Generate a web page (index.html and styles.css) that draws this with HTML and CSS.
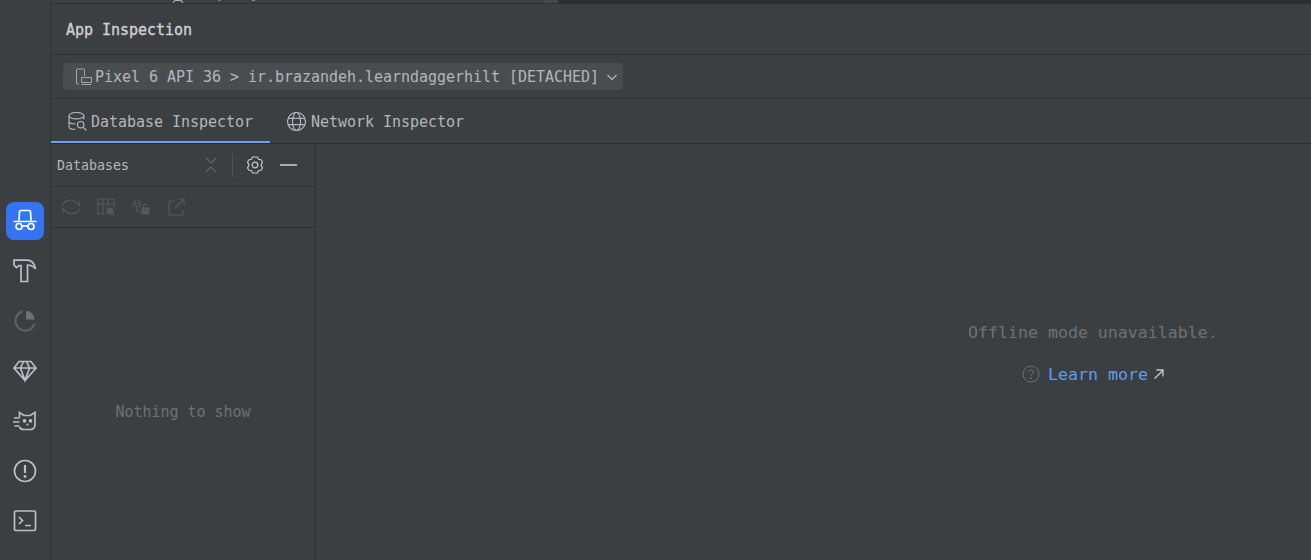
FILE: index.html
```html
<!DOCTYPE html>
<html lang="en">
<head>
<meta charset="utf-8">
<title>App Inspection</title>
<link rel="stylesheet" href="styles.css">
</head>
<body>
<div class="app">
  <aside class="rail">
    <div class="rail-btn active">
      <svg viewBox="0 0 24 24" class="ico hat"><path d="M6 11.500l.5-9Q6.600 1.500 8 1.500h8q1.400 0 1.500 1l.5 9M.5 12.500h23"/><circle cx="6" cy="17.500" r="3"/><circle cx="18" cy="17.500" r="3"/><path d="M9 17h6"/></svg>
    </div>
    <div class="rail-btn">
      <svg viewBox="0 0 24 24" class="ico"><path d="M1 1.200H14C18.500 1.200 21.500 5 22.500 10 20 7 17.500 6 14.500 6V22.500H8V6.500H6L3.500 8.500 1 6z"/></svg>
    </div>
    <div class="rail-btn dim">
      <svg viewBox="0 0 24 24" class="ico thick"><path d="M9.500 2.500a9.700 9.700 0 1 0 12 12"/><path d="M13 2a8.500 8.500 0 0 1 8.500 8.500H13z" fill="currentColor" stroke="none" class="wedge"/></svg>
    </div>
    <div class="rail-btn">
      <svg viewBox="0 0 24 24" class="ico up"><path d="M6 2.500h12L23 9 12 21.500 1 9zM1 9h22M7.500 9L12 21.500 16.500 9l-3-6.500h-3z"/></svg>
    </div>
    <div class="rail-btn">
      <svg viewBox="0 0 24 24" class="ico"><path d="M6.500 8V3.500L11 6.500h6l5-3V16a4.500 4.500 0 0 1-4.500 4.500h-7A4.500 4.500 0 0 1 6.500 18M1 9h6M0 13h6.500M1.500 17h5"/><circle cx="11.500" cy="11.800" r="1" fill="currentColor"/><circle cx="17.500" cy="11.800" r="1" fill="currentColor"/><path d="M13.500 15.500h2"/></svg>
    </div>
    <div class="rail-btn">
      <svg viewBox="0 0 24 24" class="ico"><circle cx="12" cy="12" r="10.500"/><path d="M12 6v8" stroke-width="2.200"/><circle cx="12" cy="17.500" r="1.400" fill="currentColor" stroke="none"/></svg>
    </div>
    <div class="rail-btn">
      <svg viewBox="0 0 24 24" class="ico"><rect x="1.500" y="2" width="21" height="19.500" rx="1.500"/><path d="M6 8l3.500 3.500L6 15M12 16.500h6"/></svg>
    </div>
    <div class="rail-btn">
      <svg viewBox="0 0 24 24" class="ico peek"><circle cx="10" cy="12" r="10"/></svg>
    </div>
  </aside>
  <main class="main">
    <div class="topstrip">
      <span class="strip-bit arc"></span>
      <span class="strip-bit dot1"></span>
      <span class="strip-bit dot2"></span>
      <span class="strip-fill"></span>
      <span class="strip-dark"></span>
    </div>
    <header class="title-bar">App Inspection</header>
    <div class="device-bar">
      <div class="device-pick">
        <svg viewBox="0 0 17 17" class="dev-ico"><path d="M4 16H2.500a1 1 0 0 1-1-1V2a1 1 0 0 1 1-1h6a1 1 0 0 1 1 1v6M6.500 9.500h10v5h-10zM6.500 16.500h10"/></svg>
        <span>Pixel 6 API 36 &gt; ir.brazandeh.learndaggerhilt [DETACHED]</span>
        <svg viewBox="0 0 12 12" class="chev"><path d="M1.500 4l4.500 4.500L10.500 4"/></svg>
      </div>
    </div>
    <nav class="tabs">
      <div class="tab selected">
        <svg viewBox="1 1 18 18" class="tab-ico"><ellipse cx="9" cy="4.500" rx="7" ry="3"/><path d="M2 4.500v10.500c0 1.500 3 2.500 6 2.500M2 9.800c0 1.500 3 2.500 6 2.500M16 4.500V8"/><circle cx="13" cy="13" r="3"/><path d="M15.500 15.500L18.500 18.500"/></svg>
        <span>Database Inspector</span>
      </div>
      <div class="tab second">
        <svg viewBox="1 1 18 18" class="tab-ico"><circle cx="10" cy="10" r="8.500"/><ellipse cx="10" cy="10" rx="3.800" ry="8.500"/><path d="M2 7h16M2 13h16"/></svg>
        <span>Network Inspector</span>
      </div>
    </nav>
    <div class="body">
      <section class="side">
        <div class="side-head">
          <span class="side-title">Databases</span>
          <svg viewBox="0 0 14 18" class="collapse"><path d="M2 2l5 5 5-5M2 16l5-5 5 5"/></svg>
          <span class="vsep"></span>
          <svg viewBox="0 0 20 20" class="gear"><path d="M7.500 2h5l1 2.300 2.500.4 1.500 2.300-1.500 3 1.500 3-1.500 2.300-2.500.4-1 2.300h-5l-1-2.300-2.500-.4-1.500-2.300 1.500-3-1.500-3 1.500-2.300 2.500-.4z"/><circle cx="10" cy="10" r="2.800"/></svg>
          <span class="minus"></span>
        </div>
        <div class="side-tools">
          <svg viewBox="0 0 20 20" class="tool"><path d="M1.500 9a8 8 0 0 1 13.500-3.500L18 8.500V3.500M18.500 11A8 8 0 0 1 5 14.500L2 11.500v5"/></svg>
          <svg viewBox="0 0 20 20" class="tool"><path d="M9 17H2V2h16v8M2 7h16M7 2v15M12 2v7"/><circle cx="14" cy="14" r="3" fill="currentColor"/><path d="M16 16l2.500 2.500"/></svg>
          <svg viewBox="0 0 20 20" class="tool"><path d="M4 3v3M8 3v3M2.500 6h7v3h-7zM6 9v5h3"/><rect x="11" y="11" width="7" height="6" fill="currentColor"/><path d="M12.500 11V9a2 2 0 0 1 4 0"/></svg>
          <svg viewBox="0 0 20 20" class="tool"><path d="M8 4H3v14h14v-5M9 11l9-9M12 2h6v6"/></svg>
        </div>
        <div class="side-empty">Nothing to show</div>
      </section>
      <section class="content">
        <p class="offline">Offline mode unavailable.</p>
        <div class="learn">
          <svg viewBox="0 0 18 18" class="help"><circle cx="9" cy="9" r="8"/><path d="M6.800 7a2.200 2.200 0 1 1 3.400 1.900c-.8.500-1.200 1-1.200 1.800"/><circle cx="9" cy="13.200" r=".6" fill="currentColor"/></svg>
          <span class="link">Learn more</span>
          <svg viewBox="0 0 12 12" class="ext"><path d="M1.500 10.500L10 2.500M3.500 2h6.500v6.500"/></svg>
        </div>
      </section>
    </div>
  </main>
</div>
</body>
</html>
```

FILE: styles.css
```css
* { box-sizing: border-box; }
html, body { margin: 0; height: 100%; overflow: hidden; }
body { background: #3c3f41; color: #b4b6bb; font-family: "DejaVu Sans Mono", "Liberation Mono", monospace; font-size: 15px; letter-spacing: -.03px; }
svg { fill: none; stroke: currentColor; display: block; flex: none; }
.app { display: flex; height: 560px; }
.rail { width: 51px; flex: none; border-right: 1px solid #2f3133; padding: 202px 0 0 6px; display: flex; flex-direction: column; gap: 12px; color: #bcbec3; overflow: hidden; }
.rail-btn { width: 38px; height: 38px; flex: none; border-radius: 8px; display: flex; align-items: center; justify-content: center; }
.rail-btn.active { background: #3574f0; color: #fff; }
.rail-btn.dim { color: #5f6265; }
.ico { width: 24px; height: 24px; stroke-width: 1.700; }
.ico.thick { stroke-width: 2.200; }
.ico.peek { stroke-width: 1.600; }
.wedge { color: #6f7275; }
.main { flex: 1; min-width: 0; display: flex; flex-direction: column; }
.topstrip { height: 4px; flex: none; border-bottom: 1px solid #2f3133; display: flex; overflow: hidden; }
.strip-bit { height: 3px; flex: none; }
.arc { width: 10px; margin-left: 122px; border: 1px solid #b4b6bb; border-bottom: 0; border-radius: 5px 5px 0 0; }
.dot1 { width: 3px; height: 1px; margin-left: 35px; background: #7b7e81; }
.dot2 { width: 3px; height: 1px; margin-left: 31px; background: #8b8e91; }
.strip-fill { width: 14px; margin-left: 289px; background: #45484a; }
.strip-dark { flex: 1; background: #2b2d30; }
.title-bar { height: 51px; flex: none; border-bottom: 1px solid #2f3133; padding: 2px 0 0 15px; display: flex; align-items: center; color: #ced0d4; -webkit-text-stroke: .35px #ced0d4; }
.device-bar { height: 44px; flex: none; border-bottom: 1px solid #2f3133; padding: 8px 0 0 12px; }
.device-pick { width: 560px; height: 27px; background: #4a4d50; border-radius: 4px; display: flex; align-items: center; padding: 0 0 0 12px; gap: 3px; white-space: nowrap; }
.dev-ico { width: 17px; height: 17px; stroke-width: 1; color: #a5a7ac; }
.chev { width: 12px; height: 12px; stroke-width: 1.200; margin-left: 4px; }
.tabs { height: 45px; flex: none; border-bottom: 1px solid #2b2d30; display: flex; padding-bottom: 1px; }
.tab { display: flex; align-items: center; gap: 4px; padding: 0 17px; height: 44px; }
.tab.selected { width: 219px; border-bottom: 2px solid #6f9fe8; padding-top: 4px; }
.tab.second { gap: 5px; padding-top: 2px; }
.tab-ico { width: 19px; height: 19px; stroke-width: 1.100; margin-top: -2px; }
.body { flex: 1; min-height: 0; display: flex; }
.side { width: 265px; flex: none; border-right: 1px solid #2f3133; display: flex; flex-direction: column; }
.side-head { height: 43px; flex: none; border-bottom: 1px solid #2f3133; display: flex; align-items: center; padding-left: 6px; }
.side-title { width: 147px; font-size: 13.300px; letter-spacing: 0; }
.collapse { width: 14px; height: 18px; color: #626568; stroke-width: 1.200; }
.vsep { width: 1px; height: 24px; background: #4e5154; margin: 0 12px 0 14px; }
.gear { width: 20px; height: 20px; stroke-width: 1.200; color: #c4c6cb; }
.minus { width: 17px; height: 2px; background: #a8aaae; margin-left: 15px; }
.side-tools { height: 41px; flex: none; border-bottom: 1px solid #2f3133; display: flex; align-items: center; gap: 15px; padding-left: 10px; color: #55585b; }
.tool { width: 20px; height: 20px; stroke-width: 1.200; }
.side-empty { flex: 1; display: flex; align-items: center; justify-content: center; color: #6e7174; padding-top: 36px; }
.content { flex: 1; min-width: 0; }
.offline { margin: 179px 0 0 652px; font-size: 16.600px; letter-spacing: 0; color: #6e7174; white-space: nowrap; line-height: 20px; }
.learn { margin: 21px 0 0 706px; display: flex; align-items: center; gap: 8px; height: 20px; font-size: 16.600px; letter-spacing: 0; }
.help { width: 18px; height: 18px; color: #6e7174; stroke-width: 1; }
.link { color: #5c9ded; }
.ext { width: 12px; height: 12px; stroke-width: 1.300; color: #c4c6cb; margin-left: -3px; }
```
